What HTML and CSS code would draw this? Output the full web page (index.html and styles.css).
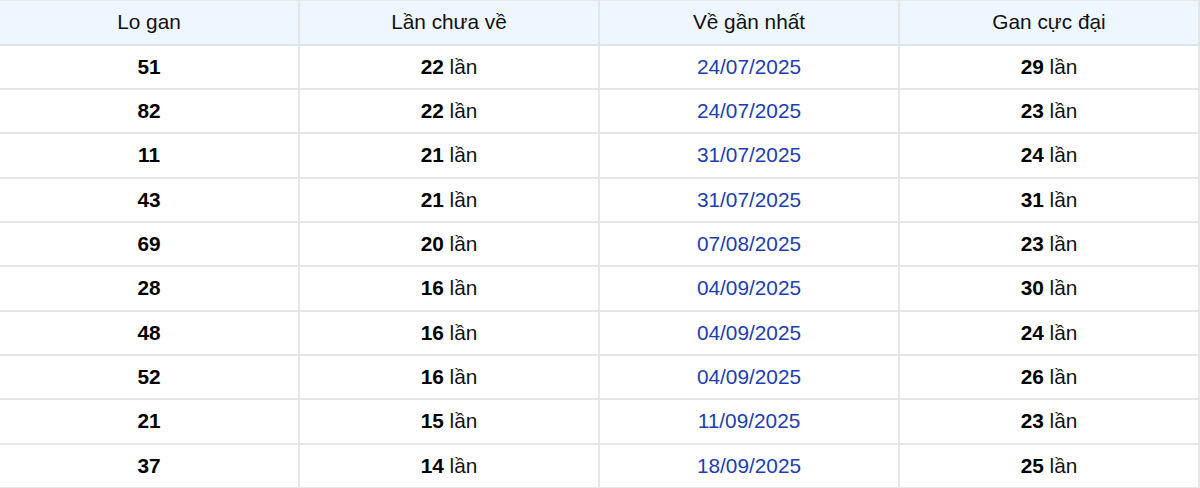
FILE: index.html
```html
<!DOCTYPE html>
<html lang="vi">
<head>
<meta charset="utf-8">
<title>Lo gan</title>
<link rel="stylesheet" href="styles.css">
</head>
<body>
<table class="gan-table">
  <thead>
    <tr><th>Lo gan</th><th>Lần chưa về</th><th>Về gần nhất</th><th>Gan cực đại</th></tr>
  </thead>
  <tbody>
    <tr><td><b>51</b></td><td><b>22</b> lần</td><td class="date">24/07/2025</td><td><b>29</b> lần</td></tr>
    <tr><td><b>82</b></td><td><b>22</b> lần</td><td class="date">24/07/2025</td><td><b>23</b> lần</td></tr>
    <tr><td><b>11</b></td><td><b>21</b> lần</td><td class="date">31/07/2025</td><td><b>24</b> lần</td></tr>
    <tr><td><b>43</b></td><td><b>21</b> lần</td><td class="date">31/07/2025</td><td><b>31</b> lần</td></tr>
    <tr><td><b>69</b></td><td><b>20</b> lần</td><td class="date">07/08/2025</td><td><b>23</b> lần</td></tr>
    <tr><td><b>28</b></td><td><b>16</b> lần</td><td class="date">04/09/2025</td><td><b>30</b> lần</td></tr>
    <tr><td><b>48</b></td><td><b>16</b> lần</td><td class="date">04/09/2025</td><td><b>24</b> lần</td></tr>
    <tr><td><b>52</b></td><td><b>16</b> lần</td><td class="date">04/09/2025</td><td><b>26</b> lần</td></tr>
    <tr><td><b>21</b></td><td><b>15</b> lần</td><td class="date">11/09/2025</td><td><b>23</b> lần</td></tr>
    <tr><td><b>37</b></td><td><b>14</b> lần</td><td class="date">18/09/2025</td><td><b>25</b> lần</td></tr>
  </tbody>
</table>
</body>
</html>
```
FILE: styles.css
```css
html, body {
  margin: 0;
  padding: 0;
  background: #fff;
}
body {
  font-family: "Liberation Sans", Arial, sans-serif;
  color: #111;
  overflow: hidden;
}
.gan-table {
  width: 1202px;
  margin-left: -2px;
  border-collapse: collapse;
  table-layout: fixed;
  font-size: 20.8px;
}
.gan-table th,
.gan-table td {
  border: 2px solid #e6e6e6;
  text-align: center;
  padding: 0;
  height: 44.35px;
  box-sizing: border-box;
  width: 25%;
}
.gan-table tr:first-child th {
  border-top-width: 1px;
}
.gan-table th {
  background: #eef6ff;
  font-weight: normal;
  height: 44px;
  border-bottom-color: #dde3ea;
}
.gan-table td b {
  font-weight: bold;
  color: #000;
}
.gan-table td.date {
  color: #1c3db5;
}
```
